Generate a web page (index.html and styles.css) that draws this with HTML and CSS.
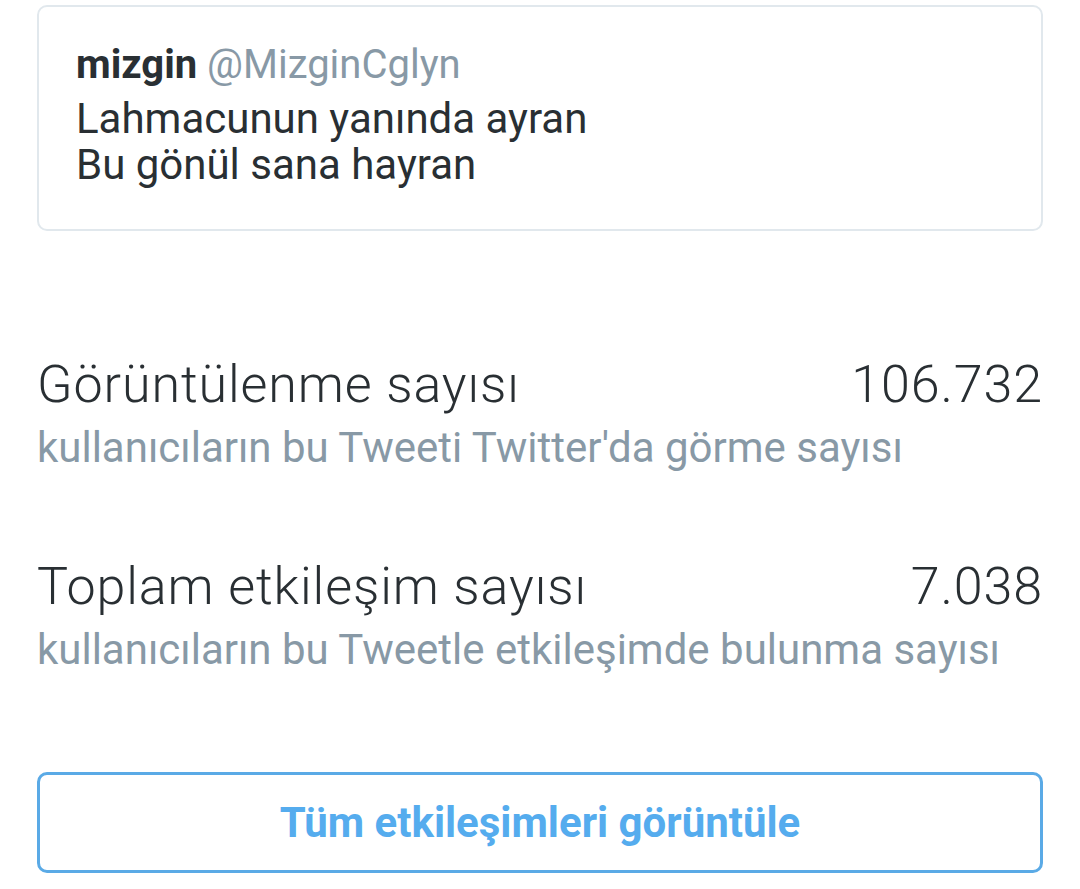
FILE: index.html
```html
<!DOCTYPE html>
<html lang="tr">
<head>
	<meta charset="UTF-8">
	<meta name="viewport" content="width=device-width, initial-scale=1.0">
	<title>Tweet etkinliği</title>
	<link rel="stylesheet" href="styles.css">
</head>
<body>

	<div class="page">
		<div class="tweet">
			<div class="author">
				<b>mizgin</b> <span class="handle">@MizginCglyn</span>
			</div>
			<p class="text">Lahmacunun yanında ayran<br>Bu gönül sana hayran</p>
		</div>

		<div class="stat first">
			<div class="row">
				<span>Görüntülenme sayısı</span>
				<span>106.732</span>
			</div>
			<div class="hint">kullanıcıların bu Tweeti Twitter'da görme sayısı</div>
		</div>

		<div class="stat">
			<div class="row">
				<span>Toplam etkileşim sayısı</span>
				<span>7.038</span>
			</div>
			<div class="hint">kullanıcıların bu Tweetle etkileşimde bulunma sayısı</div>
		</div>

		<button type="button" class="all">Tüm etkileşimleri görüntüle</button>
	</div>

</body>
</html>
```

FILE: styles.css
```css
:root{
	font-family: Roboto, "Liberation Sans", sans-serif;
}

body{
	margin: 0;
	background-color: #fff;
	color: #292f33;
}

.page{
	display: flex;
	flex-direction: column;
	padding: 5px 37px 0;
}

.tweet{
	border: 2px solid #e1e8ed;
	border-radius: 10px;
	padding: 35px 37px 41px;
	font-size: 42px;
	line-height: 46px;
}

.author{
	font-size: 40px;
}

.author b{
	font-weight: 700;
}

.handle{
	color: #8899a6;
}

.text{
	margin: 8px 0 0;
}

.stat{
	display: flex;
	flex-direction: column;
	margin-top: 85px;
}

.stat.first{
	margin-top: 124px;
}

.row{
	display: flex;
	justify-content: space-between;
	font-size: 52px;
	font-weight: 300;
	line-height: 60px;
	letter-spacing: 0.9px;
}

.hint{
	margin-top: 9px;
	color: #8899a6;
	font-size: 42px;
	line-height: 48px;
}

.all{
	margin-top: 98px;
	height: 101px;
	border: 3px solid #5aaae6;
	border-radius: 10px;
	background: #fff;
	color: #55acee;
	font-family: Roboto, "Liberation Sans", sans-serif;
	font-size: 42px;
	font-weight: 700;
}
```
